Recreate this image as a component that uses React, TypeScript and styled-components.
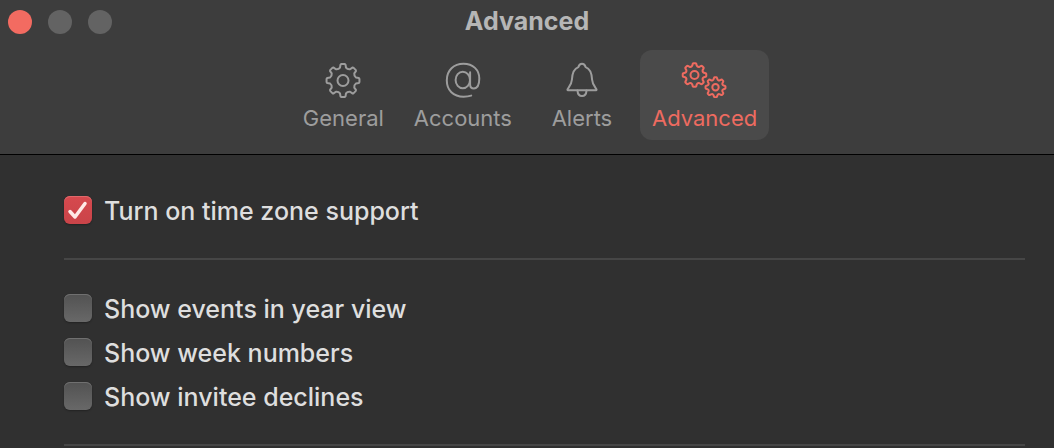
import React, { useState } from "react";
import styled, { createGlobalStyle } from "styled-components";

const GlobalStyle = createGlobalStyle`
  * { box-sizing: border-box; }
  body {
    margin: 0;
    background: #303030;
    font-family: Inter, "Liberation Sans", sans-serif;
  }
`;

const Header = styled.header`
  background: #3d3d3d;
  border-bottom: 1px solid #000;
  padding-bottom: 14px;
`;

const TitleBar = styled.div`
  display: grid;
  grid-template-columns: 1fr auto 1fr;
  align-items: center;
  height: 44px;
  padding: 0 8px;
`;

const WindowButtons = styled.div`
  display: flex;
  gap: 16px;
`;

const WindowButton = styled.button<{ $color: string }>`
  width: 24px;
  height: 24px;
  padding: 0;
  border: 0;
  border-radius: 50%;
  background: ${(p) => p.$color};
`;

const Title = styled.h1`
  margin: 0;
  padding-bottom: 2px;
  font-size: 25px;
  line-height: 30px;
  font-weight: 700;
  color: #b6b6b6;
`;

const Tabs = styled.nav`
  display: flex;
  justify-content: center;
  gap: 6px;
  padding: 6px 0 0 6px;
`;

const Tab = styled.button<{ $active: boolean }>`
  display: flex;
  flex-direction: column;
  align-items: center;
  gap: 8px;
  min-width: 104px;
  padding: 12px 12px 10px;
  border: 0;
  border-radius: 12px;
  background: ${(p) => (p.$active ? "#4a4a4a" : "transparent")};
  color: ${(p) => (p.$active ? "#ee6b60" : "#9d9d9d")};
  font-family: inherit;
  font-size: 22px;
  line-height: 24px;
  font-weight: 400;
`;

const TabIcon = styled.svg`
  display: block;
  height: 36px;
  fill: none;
  stroke: currentColor;
  stroke-width: 2;
  stroke-linecap: round;
  stroke-linejoin: round;
`;

const Main = styled.main`
  padding: 41px 29px 0 64px;
`;

const OptionGroup = styled.div`
  display: flex;
  flex-direction: column;
  align-items: flex-start;
  gap: 16px;
`;

const OptionRow = styled.label`
  display: flex;
  align-items: center;
  gap: 12px;
  font-size: 25px;
  line-height: 26px;
  font-weight: 500;
  color: #dedede;
`;

const OptionText = styled.span`
  padding-top: 2px;
`;

const BoxWrap = styled.span`
  display: grid;
  width: 28px;
  height: 28px;

  & > * { grid-area: 1 / 1; }
`;

const Box = styled.input`
  appearance: none;
  width: 28px;
  height: 28px;
  margin: 0;
  border-radius: 6px;
  background: linear-gradient(#525252, #686868);
  box-shadow: inset 0 1px 0 #707070, 0 1px 2px rgba(0, 0, 0, 0.3);

  &:checked {
    background: linear-gradient(#d6494e, #ca4449);
    box-shadow: inset 0 1px 0 #e0686b, 0 1px 2px rgba(0, 0, 0, 0.3);
  }
`;

const Tick = styled.svg`
  width: 28px;
  height: 28px;
  fill: none;
  stroke: #ffe9e6;
  stroke-width: 3.5;
  stroke-linecap: round;
  stroke-linejoin: round;
  pointer-events: none;
`;

const Divider = styled.hr`
  height: 2px;
  margin: 34px 0;
  border: 0;
  background: #464646;

  &:last-child { margin-bottom: 0; }
`;

/* Outline of an eight-toothed gear: flat tips joined by rounded valleys. */
function gearPath(cx: number, cy: number, outer: number, root: number) {
  const at = (r: number, deg: number) => {
    const a = ((deg - 90) * Math.PI) / 180;
    return `${(cx + r * Math.cos(a)).toFixed(2)} ${(cy + r * Math.sin(a)).toFixed(2)}`;
  };
  let d = "";
  for (let i = 0; i < 8; i++) {
    const c = i * 45;
    d += `${i ? "L" : "M"}${at(outer - 0.5, c - 9)}Q${at(outer, c - 7)} ${at(outer, c - 5)}`;
    d += `L${at(outer, c + 5)}Q${at(outer, c + 7)} ${at(outer - 0.5, c + 9)}`;
    d += `L${at(root + 1, c + 13)}Q${at(root - 0.5, c + 22.5)} ${at(root + 1, c + 32)}`;
  }
  return d + "Z";
}

const GearIcon = () => (
  <TabIcon viewBox="0 0 36 36" width="36" aria-hidden="true">
    <path d={gearPath(18, 18.5, 16.5, 12.3)} />
    <circle cx="18" cy="18.5" r="5.5" />
  </TabIcon>
);

const AtIcon = () => (
  <TabIcon viewBox="0 0 36 36" width="36" aria-hidden="true">
    <ellipse cx="17.8" cy="18" rx="7.2" ry="8.2" />
    <path d="M26.2 33.6C23.9 34.4 21.5 34.7 18.6 34.7C8.4 34.7 1.8 28.4 1.8 18.2C1.8 8.2 8.8 1.7 18.5 1.7C28 1.7 34.3 7.9 34.3 16.6C34.3 22.8 32.2 26.4 28.9 26.4C26.5 26.4 25.1 24.9 25.1 22.4V10.2" />
  </TabIcon>
);

const BellIcon = () => (
  <TabIcon viewBox="0 0 36 36" width="36" aria-hidden="true">
    <path d="M4 28.3C3.4 28.3 3.3 27.6 3.7 27C5.4 24.6 7.6 22.4 7.9 17.8C8.2 11.5 9.2 6.8 14.4 5.1C15 2.9 16.3 1.8 18 1.8C19.7 1.8 21 2.9 21.6 5.1C26.8 6.8 27.8 11.5 28.1 17.8C28.4 22.4 30.6 24.6 32.3 27C32.7 27.6 32.6 28.3 32 28.3Z" />
    <path d="M13.5 28.6C13.7 32 15.4 34 18 34C20.6 34 22.3 32 22.5 28.6" />
  </TabIcon>
);

const GearsIcon = () => (
  <TabIcon viewBox="0 0 48 36" width="48" aria-hidden="true">
    <path d={gearPath(13.5, 13, 11.8, 8.7)} />
    <circle cx="13.5" cy="13" r="4" />
    <path d={gearPath(34.5, 25.3, 10, 7.3)} />
    <circle cx="34.5" cy="25.3" r="3.2" />
  </TabIcon>
);

const tabs = [
  { name: "General", Icon: GearIcon },
  { name: "Accounts", Icon: AtIcon },
  { name: "Alerts", Icon: BellIcon },
  { name: "Advanced", Icon: GearsIcon },
];

function Option({ label, initial = false }: { label: string; initial?: boolean }) {
  const [checked, setChecked] = useState(initial);
  return (
    <OptionRow>
      <BoxWrap>
        <Box type="checkbox" checked={checked} onChange={(e) => setChecked(e.target.checked)} />
        {checked && (
          <Tick viewBox="0 0 28 28" aria-hidden="true">
            <path d="M6 15.5L11 21L21 7.5" />
          </Tick>
        )}
      </BoxWrap>
      <OptionText>{label}</OptionText>
    </OptionRow>
  );
}

export default function App() {
  const [active, setActive] = useState("Advanced");
  return (
    <>
      <GlobalStyle />
      <Header>
        <TitleBar>
          <WindowButtons>
            <WindowButton $color="#f36b61" aria-label="Close" />
            <WindowButton $color="#636363" aria-label="Minimize" />
            <WindowButton $color="#636363" aria-label="Zoom" />
          </WindowButtons>
          <Title>{active}</Title>
        </TitleBar>
        <Tabs>
          {tabs.map(({ name, Icon }) => (
            <Tab key={name} $active={name === active} onClick={() => setActive(name)}>
              <Icon />
              {name}
            </Tab>
          ))}
        </Tabs>
      </Header>
      <Main>
        <OptionGroup>
          <Option label="Turn on time zone support" initial />
        </OptionGroup>
        <Divider />
        <OptionGroup>
          <Option label="Show events in year view" />
          <Option label="Show week numbers" />
          <Option label="Show invitee declines" />
        </OptionGroup>
        <Divider />
      </Main>
    </>
  );
}
